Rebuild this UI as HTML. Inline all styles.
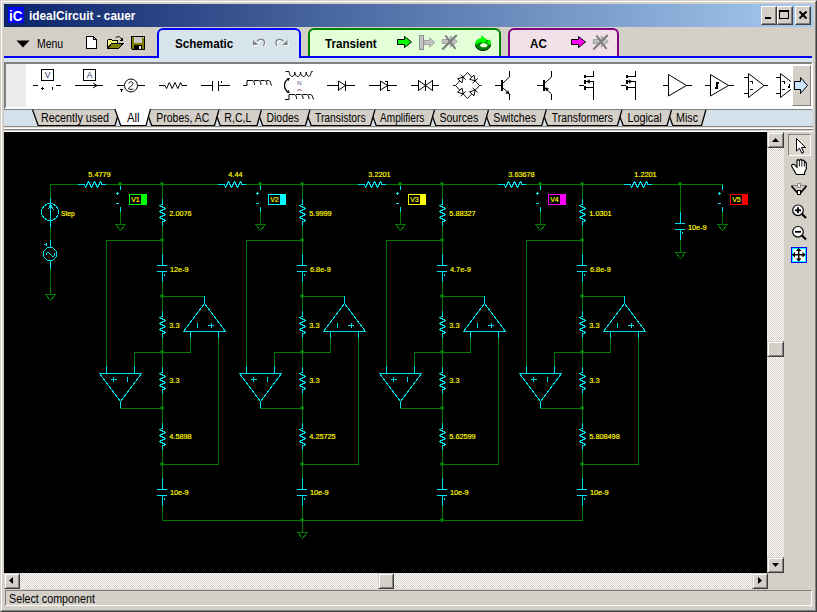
<!DOCTYPE html>
<html><head><meta charset="utf-8"><title>idealCircuit - cauer</title>
<style>
*{box-sizing:border-box;margin:0;padding:0}
html,body{width:817px;height:612px;overflow:hidden;background:#d4d0c8}
body{position:relative;font-family:"Liberation Sans",sans-serif;font-size:12px;color:#000}
.a{position:absolute}
.t{position:absolute;white-space:nowrap;transform-origin:0 0;line-height:1}
.btn{position:absolute;background:#d4d0c8;border:1px solid;border-color:#fff #404040 #404040 #fff;box-shadow:inset -1px -1px 0 #808080}
.sbtn{position:absolute;background:#d4d0c8;border:1px solid;border-color:#d4d0c8 #404040 #404040 #d4d0c8;box-shadow:inset 1px 1px 0 #fff,inset -1px -1px 0 #808080}
.sb{background:repeating-conic-gradient(#d4d0c8 0 25%,#fff 0 50%) 0 0/2px 2px}
svg{display:block}
</style></head>
<body>
<div class="a" style="left:0;top:0;width:817px;height:612px;border:1px solid;border-color:#d4d0c8 #404040 #404040 #d4d0c8"></div>
<div class="a" style="left:1px;top:1px;width:815px;height:610px;border:1px solid;border-color:#fff #808080 #808080 #fff"></div>
<div class="a" style="left:4px;top:4px;width:809px;height:23px;background:linear-gradient(to right,#0a246a,#a6caf0)"></div>
<div class="a" style="left:8px;top:7px;width:16px;height:16px;background:#0000ff"></div>
<div class="t" style="left:9px;top:8.3px;font-size:15px;color:#fff;font-weight:bold;transform:scaleX(0.9);">iC</div>
<div class="t" style="left:29px;top:10px;font-size:12px;color:#fff;font-weight:bold;transform:scaleX(0.985);">idealCircuit - cauer</div>
<div class="btn" style="left:761px;top:6px;width:16px;height:19px"></div>
<div class="btn" style="left:777px;top:6px;width:16px;height:19px"></div>
<div class="btn" style="left:795px;top:6px;width:16px;height:19px"></div>
<div class="a" style="left:765px;top:17px;width:6px;height:2px;background:#000"></div>
<div class="a" style="left:779px;top:10px;width:10px;height:9px;border:1px solid #000;border-top-width:2px"></div>
<svg class="a" style="left:798px;top:10px" width="10" height="10" viewBox="798 10 10 10" fill="none" ><path d="M799.5 11.5l7 7M806.5 11.5l-7 7" stroke="#000" stroke-width="2"/></svg>
<svg class="a" style="left:16px;top:40px" width="14" height="8"><path d="M0.5 0.5h13l-6.5 7z" fill="#000"/></svg>
<div class="t" style="left:36.7px;top:37.5px;font-size:12px;color:#000;transform:scaleX(0.87);">Menu</div>
<svg class="a" style="left:85px;top:35px" width="14" height="15" viewBox="85 35 14 15" fill="none" shape-rendering="crispEdges"><path d="M86.5 36.5h7l3 3v9h-10z" fill="#fff" stroke="#000"/><path d="M93.5 36.5v3h3" stroke="#000"/></svg>
<svg class="a" style="left:106px;top:34px" width="19" height="16" viewBox="106 34 19 16" fill="none" shape-rendering="crispEdges"><path d="M107.5 48.5v-8l1 -1h3l1 1h5v3" fill="#f4f480" stroke="#000"/><path d="M107.5 48.5l4 -5h11.5l-4.5 5z" fill="#808000" stroke="#000"/><path d="M115.5 38c1.5 -2 4.5 -2 6 1" stroke="#000" shape-rendering="auto"/><path d="M119.5 40.5h3v-3z" fill="#000"/></svg>
<svg class="a" style="left:130px;top:35px" width="17" height="16" viewBox="130 35 17 16" fill="none" shape-rendering="crispEdges"><path d="M131.500 36.500h13v13h-12l-1 -1z" fill="#808000" stroke="#000"/><rect x="134" y="37" width="8" height="6" fill="#c8c8c8"/><rect x="134" y="45" width="8" height="4" fill="#000"/><rect x="139" y="46" width="2" height="3" fill="#e8e8e8"/><rect x="143" y="37" width="1" height="1" fill="#fff"/></svg>
<div class="a" style="left:4px;top:56px;width:808px;height:2px;background:#0000ff"></div>
<div class="a" style="left:4px;top:58px;width:809px;height:4px;background:#d8e4ec"></div>
<div class="a" style="left:157px;top:28px;width:144px;height:30px;background:#d8e4ec;border:2px solid #0000ff;border-bottom:none;border-radius:6px 6px 0 0"></div>
<div class="a" style="left:308px;top:28px;width:193px;height:28px;background:#e2ffd8;border:2px solid #008000;border-bottom:none;border-radius:6px 6px 0 0"></div>
<div class="a" style="left:508px;top:28px;width:111px;height:28px;background:#f2e0e8;border:2px solid #800080;border-bottom:none;border-radius:6px 6px 0 0"></div>
<div class="t" style="left:175px;top:37.5px;font-size:12px;color:#000;font-weight:bold;transform:scaleX(0.97);">Schematic</div>
<div class="t" style="left:325px;top:37.5px;font-size:12px;color:#000;font-weight:bold;transform:scaleX(0.97);">Transient</div>
<div class="t" style="left:530px;top:37.5px;font-size:12px;color:#000;font-weight:bold;transform:scaleX(0.97);">AC</div>
<svg class="a" style="left:251px;top:36px" width="18" height="13" viewBox="251 36 18 13" fill="none" ><path d="M254 41v5h5z" fill="#fff"/><path d="M258 42.5c2 -3 8 -3 7.500 2l-1 2.500" stroke="#fff" stroke-width="1.300"/><path d="M253 40v5h5z" fill="#808080"/><path d="M257 41.5c2 -3 8 -3 7.500 2l-1 2.500" stroke="#808080" stroke-width="1.300"/></svg>
<svg class="a" style="left:273.3px;top:36px" width="18" height="13" viewBox="274 36 18 13" fill="none" ><path d="M289.5 41v5h-5z" fill="#fff"/><path d="M285.5 42.5c-2 -3 -8 -3 -7.500 2l1 2.500" stroke="#fff" stroke-width="1.300"/><path d="M288.5 40v5h-5z" fill="#808080"/><path d="M284.5 41.5c-2 -3 -8 -3 -7.500 2l1 2.500" stroke="#808080" stroke-width="1.300"/></svg>
<svg class="a" style="left:396px;top:34px" width="18" height="16" viewBox="396 34 18 16" fill="none" ><path d="M397.5 39.5h7v-3l7 5.500l-7 5.500v-3h-7z" fill="#00ff00" stroke="#000" stroke-linejoin="miter"/></svg>
<svg class="a" style="left:418px;top:34px" width="19" height="17" viewBox="418 34 19 17" fill="none" ><rect x="419.500" y="35.500" width="4" height="14" fill="#c4c4c4" stroke="#909090"/><path d="M424 40.500h5.500v-2.500l5.500 4.500l-5.500 4.500v-2.500h-5.500z" fill="#c4c4c4" stroke="#a0a0a0"/></svg>
<svg class="a" style="left:441px;top:33px" width="19" height="19" viewBox="441 33 19 19" fill="none" ><path d="M442.3 39.500h8v-3.500l7 5.500l-7 5.500v-3.500h-8z" fill="#c0c0c0" stroke="#a0a0a0"/><path d="M442.3 49.500l14.500 -14.500M445.5 35.500l10 13.500" stroke="#7c7c7c" stroke-width="2.100"/></svg>
<svg class="a" style="left:473px;top:33px" width="20" height="20" viewBox="473 33 20 20" fill="none" ><ellipse cx="483" cy="45" rx="7.500" ry="5.500" fill="#008000" stroke="#002800"/><path d="M475.300 45c-0.500 -3.500 1.500 -6.500 5.700 -6.800v-3l6.700 5l2.300 -0.700c1.300 1.500 1.300 4.500 0.500 6l-3 -2.500l-2 -0.500l-2.500 2.500h-1.500v-2.800l-3 0.800z" fill="#00ff00"/><path d="M481.500 42.300v3h1.500l5 -5.300" stroke="#003000" stroke-width="0.800"/><ellipse cx="483.800" cy="45.200" rx="3.600" ry="2" fill="#e2ffd8"/></svg>
<svg class="a" style="left:570px;top:34px" width="18" height="16" viewBox="570 34 18 16" fill="none" ><path d="M571.5 39.5h7v-3l7 5.500l-7 5.500v-3h-7z" fill="#ff00ff" stroke="#000" stroke-linejoin="miter"/></svg>
<svg class="a" style="left:591.8px;top:33px" width="19" height="19" viewBox="591.8 33 19 19" fill="none" ><path d="M593.1 39.500h8v-3.500l7 5.500l-7 5.500v-3.500h-8z" fill="#c0c0c0" stroke="#a0a0a0"/><path d="M593.1 49.500l14.500 -14.500M596.3 35.500l10 13.500" stroke="#7c7c7c" stroke-width="2.100"/></svg>
<div class="a" style="left:4px;top:62px;width:809px;height:47px;background:#fff;border:1px solid;border-color:#808080 #fff #fff #808080"></div>
<div class="a" style="left:5px;top:63px;width:807px;height:45px;border:1px solid;border-color:#808080 #fff #fff #808080"></div>
<div class="a" style="left:6px;top:64px;width:20px;height:43px;background:#ececec"></div>
<svg class="a" style="left:26px;top:64px" width="765" height="43" viewBox="26 64 765 43" fill="none" shape-rendering="crispEdges" font-family="Liberation Sans, sans-serif"><rect x="41.500" y="69.500" width="12" height="11" stroke="#000" fill="#fff"/><text x="47.500" y="78.300" font-size="8.500" text-anchor="middle" fill="#303060" stroke="none">V</text><path d="M33 85.500h5M56 85.500h5M41 88.500h3M42.500 87v3M52.500 87v3" stroke="#000" stroke-width="1" /><rect x="83.500" y="69.500" width="12" height="11" stroke="#000" fill="#fff"/><text x="89.500" y="78.300" font-size="8.500" text-anchor="middle" fill="#303060" stroke="none">A</text><path d="M75 85.500h28" stroke="#000" stroke-width="1" /><path d="M93 83l4 2.500l-4 2.500" stroke="#000" shape-rendering="auto"/><path d="M117 85.500h7M138 85.500h7M120 89.500h3M121.500 89.500v2" stroke="#000" stroke-width="1" /><circle cx="131" cy="85.500" r="6.500" stroke="#000" shape-rendering="auto"/><path d="M128.500 83.500c1 -2.500 5 -2 4.500 0.500c-0.500 2 -4 2.500 -4.500 5c1.500 0.500 3.500 0.500 5 0" stroke="#000" shape-rendering="auto" stroke-width="0.900"/><path d="M159 85.500h6l1.500 3l2.800 -6l2.900 6l2.800 -6l2.800 6l2.800 -6l1.400 3h5" stroke="#000" stroke-width="1" shape-rendering="auto"/><path d="M201 85.500h11M218 85.500h12M212.500 81v10M218.500 81v10M221.500 81v2" stroke="#000" stroke-width="1" /><path d="M243 85.5h4v-5h5c2 0 2.500 2 2.500 4.500m-0.500 -4.500h4.500c2 0 2.500 2 2.500 4.500m-0.500 -4.500h4c2 0 2.500 2 2.500 4.500m-0.500 -4.500h2c2 0 2 3 3 5" stroke="#000" shape-rendering="auto"/><path d="M285 99.5h4v-5h5c2 0 2.500 2 2.500 4.500m-0.500 -4.500h4.500c2 0 2.500 2 2.500 4.500m-0.500 -4.500h4c2 0 2.500 2 2.500 4.500m-0.500 -4.500h2c2 0 2 3 3 5" stroke="#000" shape-rendering="auto"/><path transform="translate(289 0) scale(0.88 1) translate(-289 0)" d="M285 71.500h4c0.500 3 1.500 5 3.500 5s3 -2 3 -4.500c0.500 2.500 1.500 4.500 3.500 4.500s3 -2 3 -4.500c0.500 2.500 1.500 4.500 3.500 4.500s3 -2 3 -4.500c0.500 2.500 1.500 4.500 3 4.500s2.500 -3 3 -5h1.500" stroke="#000" shape-rendering="auto"/><path d="M289 78.500c-6 3 -6 11 0 14" stroke="#000" stroke-width="1.300" shape-rendering="auto"/><path d="M290 78l-3.500 0.500l2 2.500zM290 93l-3.500 -0.500l2 -2.500z" fill="#000" shape-rendering="auto"/><text x="299.500" y="84.500" font-size="6" text-anchor="middle" fill="#504080" stroke="none">N</text><path d="M297.500 90.500c1 -1 3 -1 4 0" stroke="#703050" shape-rendering="auto"/><path d="M327 85.500h28M338.500 81v10M345.500 81v10" stroke="#000" stroke-width="1" /><path d="M338.500 81l7 4.500l-7 4.500z" stroke="#000" fill="#fff" shape-rendering="auto"/><path d="M369 85.500h28M380.500 81v10M387.500 81v10M385 81.500h3M387 90.500h3" stroke="#000" stroke-width="1" /><path d="M380.500 81l7 4.500l-7 4.500z" stroke="#000" fill="#fff" shape-rendering="auto"/><path d="M411 85.500h28M418.500 80v11M432.500 80v11M425.500 80v11" stroke="#000" stroke-width="1" /><path d="M418.500 80.500l7 5l-7 5zM432.500 80.500l-7 5l7 5z" stroke="#000" fill="#fff" shape-rendering="auto"/><path d="M453 85.500h2.500L467.500 72.500L479.500 85.500h2M479.500 85.500L467.500 98.500L455.500 85.500" stroke="#000" shape-rendering="auto" stroke-width="0.900"/><g transform="translate(461.5 79) rotate(-47)" shape-rendering="auto"><path d="M-2.500 -3v6l5 -3zM2.500 -3.500v7" stroke="#000" fill="#fff" stroke-width="0.900"/></g><g transform="translate(473.5 79) rotate(47)" shape-rendering="auto"><path d="M-2.500 -3v6l5 -3zM2.500 -3.500v7" stroke="#000" fill="#fff" stroke-width="0.900"/></g><g transform="translate(461.5 92) rotate(47)" shape-rendering="auto"><path d="M-2.500 -3v6l5 -3zM2.500 -3.500v7" stroke="#000" fill="#fff" stroke-width="0.900"/></g><g transform="translate(473.5 92) rotate(-47)" shape-rendering="auto"><path d="M-2.500 -3v6l5 -3zM2.500 -3.500v7" stroke="#000" fill="#fff" stroke-width="0.900"/></g><path d="M495 85.500h6" stroke="#000" stroke-width="1" /><rect x="500.5" y="80" width="2" height="10.500" fill="#000"/><path d="M502.5 83.500l7 -6.500v-6M502.5 87.500l7 6.500v6" stroke="#000" shape-rendering="auto"/><path d="M509.3 94l-3.500 -0.800l2.300 -2.500z" fill="#000" stroke="#000" stroke-width="0.500" shape-rendering="auto"/><path d="M537 85.500h6" stroke="#000" stroke-width="1" /><rect x="542.5" y="80" width="2" height="10.500" fill="#000"/><path d="M544.5 83.500l7 -6.500v-6M544.5 87.500l7 6.500v6" stroke="#000" shape-rendering="auto"/><path d="M545.2 87.800l3.500 0.800l-2.300 2.500z" fill="#000" stroke="#000" stroke-width="0.500" shape-rendering="auto"/><path d="M579 85.500h5" stroke="#000" stroke-width="1" /><path d="M585 74.500v3.500M585 79.500v4.500M585 85.500v4" stroke="#000" stroke-width="2"/><path d="M586 76.500h7.500v-5.500M586 81.500h7.500M586 87.500h7.500M593.5 81.500v18.500" stroke="#000" stroke-width="1" /><path d="M586.5 81.500l3 -1.800v3.600z" fill="#000" stroke="#000" stroke-width="0.500" shape-rendering="auto"/><path d="M621 85.500h5" stroke="#000" stroke-width="1" /><path d="M627 74.500v3.500M627 79.500v4.500M627 85.500v4" stroke="#000" stroke-width="2"/><path d="M628 76.500h7.500v-5.500M628 81.500h7.500M628 87.500h7.500M635.5 81.500v18.500" stroke="#000" stroke-width="1" /><path d="M632 81.500l-3 -1.800v3.600z" fill="#000" stroke="#000" stroke-width="0.500" shape-rendering="auto"/><path d="M663 85.500h5.500M686 85.500h6" stroke="#000" stroke-width="1" /><path d="M668.500 74.500v21.500l18 -10.500z" stroke="#000" shape-rendering="auto"/><path d="M705 85.500h5.500M728 85.500h6" stroke="#000" stroke-width="1" /><path d="M710.500 74.500v21.500l18 -10.500z" stroke="#000" shape-rendering="auto"/><path d="M714.500 88h2.500v-5h2" stroke="#000" stroke-width="1.3" /><path d="M744 77.500h4M744 93.500h4M764 85.500h4M750 81.500h3M752.500 80.500v3M750 89.500h3" stroke="#000" stroke-width="1" /><path d="M748.500 73.500v24l15.500 -12z" stroke="#000" shape-rendering="auto"/><path d="M776 77.500h4M776 93.500h4M782 81.500h3M784.500 80.500v3M782 89.500h3" stroke="#000" stroke-width="1" /><path d="M787.500 87h2.200v-3" stroke="#000" stroke-width="1.5" /><path d="M780.500 73.500v24l15.500 -12z" stroke="#000" shape-rendering="auto"/></svg>
<div class="a" style="left:792px;top:65px;width:19px;height:41px;background:#d4d0c8;border:1px solid;border-color:#fff #808080 #808080 #fff"></div>
<svg class="a" style="left:793px;top:76px" width="16" height="19" viewBox="793 76 16 19" fill="none" ><path d="M794.500 81.500h6v-4l7 8l-7 8v-4h-6z" fill="#cce4ff" stroke="#000"/></svg>
<div class="a" style="left:4px;top:62px;width:1px;height:47px;background:#808080"></div>
<div class="a" style="left:4px;top:109px;width:809px;height:17px;background:#d4e1ea"></div>
<svg class="a" style="left:4px;top:106px" width="808" height="21" viewBox="4 106 808 21" font-family="Liberation Sans, sans-serif"><path d="M4 109.500H813" stroke="#808080" shape-rendering="crispEdges"/><path d="M666.9 109.5L672.8 125.5H701.5L706 109.5z" fill="#d4d0c8" stroke="none"/><path d="M666.9 109.5L672.8 125.5H701.5L706 109.5" fill="none" stroke="#000" stroke-width="1.250"/><path d="M666.9 109.5H706" stroke="#808080" shape-rendering="crispEdges"/><path d="M617.3 109.5L623.2 125.5H667.1L671.6 109.5z" fill="#d4d0c8" stroke="none"/><path d="M617.3 109.5L623.2 125.5H667.1L671.6 109.5" fill="none" stroke="#000" stroke-width="1.250"/><path d="M617.3 109.5H671.6" stroke="#808080" shape-rendering="crispEdges"/><path d="M541.6 109.5L547.5 125.5H617.5L622 109.5z" fill="#d4d0c8" stroke="none"/><path d="M541.6 109.5L547.5 125.5H617.5L622 109.5" fill="none" stroke="#000" stroke-width="1.250"/><path d="M541.6 109.5H622" stroke="#808080" shape-rendering="crispEdges"/><path d="M483.9 109.5L489.8 125.5H541.8L546.3 109.5z" fill="#d4d0c8" stroke="none"/><path d="M483.9 109.5L489.8 125.5H541.8L546.3 109.5" fill="none" stroke="#000" stroke-width="1.250"/><path d="M483.9 109.5H546.3" stroke="#808080" shape-rendering="crispEdges"/><path d="M429.9 109.5L435.8 125.5H484.1L488.6 109.5z" fill="#d4d0c8" stroke="none"/><path d="M429.9 109.5L435.8 125.5H484.1L488.6 109.5" fill="none" stroke="#000" stroke-width="1.250"/><path d="M429.9 109.5H488.6" stroke="#808080" shape-rendering="crispEdges"/><path d="M370.3 109.5L376.2 125.5H430.1L434.6 109.5z" fill="#d4d0c8" stroke="none"/><path d="M370.3 109.5L376.2 125.5H430.1L434.6 109.5" fill="none" stroke="#000" stroke-width="1.250"/><path d="M370.3 109.5H434.6" stroke="#808080" shape-rendering="crispEdges"/><path d="M305.3 109.5L311.2 125.5H370.5L375 109.5z" fill="#d4d0c8" stroke="none"/><path d="M305.3 109.5L311.2 125.5H370.5L375 109.5" fill="none" stroke="#000" stroke-width="1.250"/><path d="M305.3 109.5H375" stroke="#808080" shape-rendering="crispEdges"/><path d="M256.8 109.5L262.7 125.5H305.5L310 109.5z" fill="#d4d0c8" stroke="none"/><path d="M256.8 109.5L262.7 125.5H305.5L310 109.5" fill="none" stroke="#000" stroke-width="1.250"/><path d="M256.8 109.5H310" stroke="#808080" shape-rendering="crispEdges"/><path d="M214.3 109.5L220.2 125.5H257L261.5 109.5z" fill="#d4d0c8" stroke="none"/><path d="M214.3 109.5L220.2 125.5H257L261.5 109.5" fill="none" stroke="#000" stroke-width="1.250"/><path d="M214.3 109.5H261.5" stroke="#808080" shape-rendering="crispEdges"/><path d="M145.8 109.5L151.7 125.5H214.5L219 109.5z" fill="#d4d0c8" stroke="none"/><path d="M145.8 109.5L151.7 125.5H214.5L219 109.5" fill="none" stroke="#000" stroke-width="1.250"/><path d="M145.8 109.5H219" stroke="#808080" shape-rendering="crispEdges"/><path d="M32.5 109.5L38.2 125.5H115L119.5 109.5z" fill="#d4d0c8" stroke="none"/><path d="M32.5 109.5L38.2 125.5H115L119.5 109.5" fill="none" stroke="#000" stroke-width="1.250"/><path d="M32.5 109.5H119.5" stroke="#808080" shape-rendering="crispEdges"/><path d="M114.8 109.5L120.7 125.5H146L150.5 109.5V107H114.8z" fill="#fff" stroke="none"/><path d="M114.8 109L120.7 125.5H146L150.5 109" fill="none" stroke="#000" stroke-width="1.250"/><text x="41" y="122" font-size="12.300" textLength="68" lengthAdjust="spacingAndGlyphs" fill="#000">Recently used</text><text x="127" y="122" font-size="12.300" textLength="12.5" lengthAdjust="spacingAndGlyphs" fill="#000">All</text><text x="156.3" y="122" font-size="12.300" textLength="53" lengthAdjust="spacingAndGlyphs" fill="#000">Probes, AC</text><text x="224.3" y="122" font-size="12.300" textLength="27.1" lengthAdjust="spacingAndGlyphs" fill="#000">R,C,L</text><text x="266.5" y="122" font-size="12.300" textLength="32.5" lengthAdjust="spacingAndGlyphs" fill="#000">Diodes</text><text x="315" y="122" font-size="12.300" textLength="50.6" lengthAdjust="spacingAndGlyphs" fill="#000">Transistors</text><text x="380" y="122" font-size="12.300" textLength="44.3" lengthAdjust="spacingAndGlyphs" fill="#000">Amplifiers</text><text x="439.4" y="122" font-size="12.300" textLength="38.9" lengthAdjust="spacingAndGlyphs" fill="#000">Sources</text><text x="493.3" y="122" font-size="12.300" textLength="42.7" lengthAdjust="spacingAndGlyphs" fill="#000">Switches</text><text x="551.8" y="122" font-size="12.300" textLength="61.2" lengthAdjust="spacingAndGlyphs" fill="#000">Transformers</text><text x="627.4" y="122" font-size="12.300" textLength="34.2" lengthAdjust="spacingAndGlyphs" fill="#000">Logical</text><text x="676" y="122" font-size="12.300" textLength="22" lengthAdjust="spacingAndGlyphs" fill="#000">Misc</text></svg>
<div class="a" style="left:4px;top:126px;width:809px;height:1px;background:#8c8a86"></div>
<div class="a" style="left:4px;top:127px;width:809px;height:1px;background:#e8e4dc"></div>
<div class="a" style="left:4px;top:128px;width:809px;height:1px;background:#ffffff"></div>
<div class="a" style="left:4px;top:129px;width:809px;height:1px;background:#808080"></div>
<div class="a" style="left:4px;top:130px;width:809px;height:1px;background:#d4d0c8"></div>
<div class="a" style="left:4px;top:131px;width:809px;height:1px;background:#ffffff"></div>
<svg id="schem" width="763" height="441" viewBox="4 132 763 441" style="position:absolute;left:4px;top:132px;background:#000" fill="none" stroke-width="1" shape-rendering="crispEdges" stroke-linecap="square" stroke-linejoin="bevel" font-family="Liberation Sans, sans-serif">
<polyline points="50.5,184.5 78.5,184.5" stroke="#007c00" />
<polyline points="106.5,184.5 218.5,184.5" stroke="#007c00" />
<polyline points="246.5,184.5 358.5,184.5" stroke="#007c00" />
<polyline points="386.5,184.5 498.5,184.5" stroke="#007c00" />
<polyline points="526.5,184.5 624.5,184.5" stroke="#007c00" />
<polyline points="652.5,184.5 722.5,184.5" stroke="#007c00" />
<polyline points="50.5,184.5 50.5,198.5" stroke="#007c00" />
<polyline points="50.5,226.5 50.5,240.5" stroke="#007c00" />
<polyline points="50.5,268.5 50.5,294.5" stroke="#007c00" />
<polyline points="45.5,294.5 55.5,294.5 50.5,300.5 45.5,294.5" stroke="#007c00" />
<polyline points="50.5,198.5 50.5,226.5" stroke="#00e0e8" />
<circle cx="50" cy="212" r="8.5" stroke="#00e0e8"/>
<polyline points="48.5,208.5 50.5,205.5 53.5,209.5" stroke="#00e0e8" />
<polyline points="49.5,205.5 51.5,205.5" stroke="#00e0e8" />
<polyline points="49.5,206.5 51.5,206.5" stroke="#00e0e8" />
<text x="61" y="216" font-size="6.7" fill="#ffff00" stroke="#ffee00" stroke-width="0.18">Step</text>
<polyline points="50.5,240.5 50.5,247.5" stroke="#00e0e8" />
<polyline points="50.5,261.5 50.5,268.5" stroke="#00e0e8" />
<polyline points="47.5,247.5 52.5,247.5 56.5,251.5 56.5,256.5 52.5,260.5 47.5,260.5 43.5,256.5 43.5,251.5 47.5,247.5" stroke="#00e0e8" />
<polyline points="46.5,254.5 46.5,253.5 47.5,252.5 48.5,252.5 52.5,256.5 53.5,256.5 54.5,255.5 54.5,253.5" stroke="#00e0e8" />
<polyline points="44.5,244.5 46.5,244.5" stroke="#00e0e8" />
<polyline points="46.5,243.5 46.5,245.5" stroke="#00e0e8" />
<polyline points="78.5,184.5 84.5,184.5 85.5,187.5 88.5,181.5 91.5,187.5 94.5,181.5 97.5,187.5 100.5,181.5 102,184.5 105.5,184.5" stroke="#00e0e8" />
<text x="88.3" y="177.2" font-size="7.3" fill="#ffff00" stroke="#ffee00" stroke-width="0.18">5.4779</text>
<polyline points="218.5,184.5 224.5,184.5 225.5,187.5 228.5,181.5 231.5,187.5 234.5,181.5 237.5,187.5 240.5,181.5 242,184.5 245.5,184.5" stroke="#00e0e8" />
<text x="228.3" y="177.2" font-size="7.3" fill="#ffff00" stroke="#ffee00" stroke-width="0.18">4.44</text>
<polyline points="358.5,184.5 364.5,184.5 365.5,187.5 368.5,181.5 371.5,187.5 374.5,181.5 377.5,187.5 380.5,181.5 382,184.5 385.5,184.5" stroke="#00e0e8" />
<text x="368.3" y="177.2" font-size="7.3" fill="#ffff00" stroke="#ffee00" stroke-width="0.18">3.2201</text>
<polyline points="498.5,184.5 504.5,184.5 505.5,187.5 508.5,181.5 511.5,187.5 514.5,181.5 517.5,187.5 520.5,181.5 522,184.5 525.5,184.5" stroke="#00e0e8" />
<text x="508.3" y="177.2" font-size="7.3" fill="#ffff00" stroke="#ffee00" stroke-width="0.18">3.63678</text>
<polyline points="624.5,184.5 630.5,184.5 631.5,187.5 634.5,181.5 637.5,187.5 640.5,181.5 643.5,187.5 646.5,181.5 648,184.5 651.5,184.5" stroke="#00e0e8" />
<text x="634.3" y="177.2" font-size="7.3" fill="#ffff00" stroke="#ffee00" stroke-width="0.18">1.2201</text>
<polyline points="120.5,185.5 120.5,189.5" stroke="#00e0e8" />
<polyline points="116.5,193.5 118.5,193.5" stroke="#00e0e8" />
<polyline points="117.5,192.5 117.5,194.5" stroke="#00e0e8" />
<polyline points="116.5,203.5 118.5,203.5" stroke="#00e0e8" />
<polyline points="120.5,207.5 120.5,212.5" stroke="#00e0e8" />
<polyline points="120.5,212.5 120.5,224.5" stroke="#007c00" />
<polyline points="115.5,224.5 125.5,224.5 120.5,230.5 115.5,224.5" stroke="#007c00" />
<rect x="129" y="194" width="18" height="11" fill="#00ff00" stroke="none"/>
<rect x="130" y="195" width="11" height="9" fill="#000" stroke="none"/>
<text x="131.2" y="202.2" font-size="7" fill="#ffff00" stroke="#ffee00" stroke-width="0.18">V1</text>
<polyline points="260.5,185.5 260.5,189.5" stroke="#00e0e8" />
<polyline points="256.5,193.5 258.5,193.5" stroke="#00e0e8" />
<polyline points="257.5,192.5 257.5,194.5" stroke="#00e0e8" />
<polyline points="256.5,203.5 258.5,203.5" stroke="#00e0e8" />
<polyline points="260.5,207.5 260.5,212.5" stroke="#00e0e8" />
<polyline points="260.5,212.5 260.5,224.5" stroke="#007c00" />
<polyline points="255.5,224.5 265.5,224.5 260.5,230.5 255.5,224.5" stroke="#007c00" />
<rect x="268" y="194" width="18" height="11" fill="#00ffff" stroke="none"/>
<rect x="269" y="195" width="11" height="9" fill="#000" stroke="none"/>
<text x="270.2" y="202.2" font-size="7" fill="#ffff00" stroke="#ffee00" stroke-width="0.18">V2</text>
<polyline points="400.5,185.5 400.5,189.5" stroke="#00e0e8" />
<polyline points="396.5,193.5 398.5,193.5" stroke="#00e0e8" />
<polyline points="397.5,192.5 397.5,194.5" stroke="#00e0e8" />
<polyline points="396.5,203.5 398.5,203.5" stroke="#00e0e8" />
<polyline points="400.5,207.5 400.5,212.5" stroke="#00e0e8" />
<polyline points="400.5,212.5 400.5,224.5" stroke="#007c00" />
<polyline points="395.5,224.5 405.5,224.5 400.5,230.5 395.5,224.5" stroke="#007c00" />
<rect x="408" y="194" width="18" height="11" fill="#ffff00" stroke="none"/>
<rect x="409" y="195" width="11" height="9" fill="#000" stroke="none"/>
<text x="410.2" y="202.2" font-size="7" fill="#ffff00" stroke="#ffee00" stroke-width="0.18">V3</text>
<polyline points="540.5,185.5 540.5,189.5" stroke="#00e0e8" />
<polyline points="536.5,193.5 538.5,193.5" stroke="#00e0e8" />
<polyline points="537.5,192.5 537.5,194.5" stroke="#00e0e8" />
<polyline points="536.5,203.5 538.5,203.5" stroke="#00e0e8" />
<polyline points="540.5,207.5 540.5,212.5" stroke="#00e0e8" />
<polyline points="540.5,212.5 540.5,224.5" stroke="#007c00" />
<polyline points="535.5,224.5 545.5,224.5 540.5,230.5 535.5,224.5" stroke="#007c00" />
<rect x="548" y="194" width="18" height="11" fill="#ff00ff" stroke="none"/>
<rect x="549" y="195" width="11" height="9" fill="#000" stroke="none"/>
<text x="550.2" y="202.2" font-size="7" fill="#ffff00" stroke="#ffee00" stroke-width="0.18">V4</text>
<polyline points="722.5,185.5 722.5,189.5" stroke="#00e0e8" />
<polyline points="718.5,193.5 720.5,193.5" stroke="#00e0e8" />
<polyline points="719.5,192.5 719.5,194.5" stroke="#00e0e8" />
<polyline points="718.5,203.5 720.5,203.5" stroke="#00e0e8" />
<polyline points="722.5,207.5 722.5,212.5" stroke="#00e0e8" />
<polyline points="722.5,212.5 722.5,224.5" stroke="#007c00" />
<polyline points="717.5,224.5 727.5,224.5 722.5,230.5 717.5,224.5" stroke="#007c00" />
<rect x="730" y="194" width="18" height="11" fill="#ff0000" stroke="none"/>
<rect x="731" y="195" width="11" height="9" fill="#000" stroke="none"/>
<text x="732.2" y="202.2" font-size="7" fill="#ffff00" stroke="#ffee00" stroke-width="0.18">V5</text>
<polyline points="680.5,184.5 680.5,212.5" stroke="#007c00" />
<polyline points="680.5,212.5 680.5,223.5" stroke="#00e0e8" />
<polyline points="675.5,223.5 684.5,223.5" stroke="#00e0e8" />
<polyline points="675.5,229.5 684.5,229.5" stroke="#00e0e8" />
<polyline points="680.5,229.5 680.5,240.5" stroke="#00e0e8" />
<polyline points="682.5,232.5 682.5,233.5" stroke="#00e0e8" />
<text x="688" y="230.2" font-size="7.3" fill="#ffff00" stroke="#ffee00" stroke-width="0.18">10e-9</text>
<polyline points="680.5,240.5 680.5,252.5" stroke="#007c00" />
<polyline points="675.5,252.5 685.5,252.5 680.5,258.5 675.5,252.5" stroke="#007c00" />
<polyline points="162.5,184.5 162.5,198.5" stroke="#007c00" />
<polyline points="162.5,199.5 162.5,204.5 159.5,205.5 165.5,208.5 159.5,211.5 165.5,214.5 159.5,217.5 165.5,220.5 162.5,222 162.5,225.5" stroke="#00e0e8" />
<text x="169.3" y="216.2" font-size="7.3" fill="#ffff00" stroke="#ffee00" stroke-width="0.18">2.0076</text>
<polyline points="162.5,226.5 162.5,254.5" stroke="#007c00" />
<polyline points="162.5,254.5 162.5,265.5" stroke="#00e0e8" />
<polyline points="157.5,265.5 166.5,265.5" stroke="#00e0e8" />
<polyline points="157.5,271.5 166.5,271.5" stroke="#00e0e8" />
<polyline points="162.5,271.5 162.5,282.5" stroke="#00e0e8" />
<polyline points="164.5,274.5 164.5,275.5" stroke="#00e0e8" />
<text x="170" y="272.2" font-size="7.3" fill="#ffff00" stroke="#ffee00" stroke-width="0.18">12e-9</text>
<polyline points="162.5,282.5 162.5,310.5" stroke="#007c00" />
<polyline points="162.5,311.5 162.5,316.5 159.5,317.5 165.5,320.5 159.5,323.5 165.5,326.5 159.5,329.5 165.5,332.5 162.5,334 162.5,337.5" stroke="#00e0e8" />
<text x="169.3" y="327.808" font-size="7.3" fill="#ffff00" stroke="#ffee00" stroke-width="0.18">3.3</text>
<polyline points="162.5,338.5 162.5,366.5" stroke="#007c00" />
<polyline points="162.5,367.5 162.5,372.5 159.5,373.5 165.5,376.5 159.5,379.5 165.5,382.5 159.5,385.5 165.5,388.5 162.5,390 162.5,393.5" stroke="#00e0e8" />
<text x="169.3" y="383.416" font-size="7.3" fill="#ffff00" stroke="#ffee00" stroke-width="0.18">3.3</text>
<polyline points="162.5,394.5 162.5,422.5" stroke="#007c00" />
<polyline points="162.5,423.5 162.5,428.5 159.5,429.5 165.5,432.5 159.5,435.5 165.5,438.5 159.5,441.5 165.5,444.5 162.5,446 162.5,449.5" stroke="#00e0e8" />
<text x="169.3" y="439.024" font-size="7.3" fill="#ffff00" stroke="#ffee00" stroke-width="0.18">4.5898</text>
<polyline points="162.5,450.5 162.5,478.5" stroke="#007c00" />
<polyline points="162.5,478.5 162.5,489.5" stroke="#00e0e8" />
<polyline points="157.5,489.5 166.5,489.5" stroke="#00e0e8" />
<polyline points="157.5,495.5 166.5,495.5" stroke="#00e0e8" />
<polyline points="162.5,495.5 162.5,506.5" stroke="#00e0e8" />
<polyline points="164.5,498.5 164.5,499.5" stroke="#00e0e8" />
<text x="170" y="494.632" font-size="7.3" fill="#ffff00" stroke="#ffee00" stroke-width="0.18">10e-9</text>
<polyline points="162.5,506.5 162.5,520.5" stroke="#007c00" />
<polyline points="162.5,240.5 106.5,240.5 106.5,366.5" stroke="#007c00" />
<polyline points="162.5,296.5 204.5,296.5" stroke="#007c00" />
<polyline points="204.5,296.5 204.5,303.5" stroke="#00e0e8" />
<polyline points="204.5,303.5 183.5,331.5 225.5,331.5 204.5,303.5" stroke="#00e0e8" />
<polyline points="190.5,331.5 190.5,338.5" stroke="#00e0e8" />
<polyline points="218.5,331.5 218.5,338.5" stroke="#00e0e8" />
<polyline points="197.5,323.5 197.5,327.5" stroke="#00e0e8" />
<polyline points="208.5,325.5 213.5,325.5" stroke="#00e0e8" />
<polyline points="211.5,323.5 211.5,327.5" stroke="#00e0e8" />
<polyline points="190.5,338.5 190.5,352.5 134.5,352.5 134.5,366.5" stroke="#007c00" />
<polyline points="218.5,338.5 218.5,464.5 162.5,464.5" stroke="#007c00" />
<polyline points="106.5,366.5 106.5,373.5" stroke="#00e0e8" />
<polyline points="134.5,366.5 134.5,373.5" stroke="#00e0e8" />
<polyline points="99.5,373.5 141.5,373.5 120.5,401.5 99.5,373.5" stroke="#00e0e8" />
<polyline points="120.5,401.5 120.5,408.5" stroke="#00e0e8" />
<polyline points="111.5,379.5 116.5,379.5" stroke="#00e0e8" />
<polyline points="113.5,377.5 113.5,381.5" stroke="#00e0e8" />
<polyline points="127.5,377.5 127.5,381.5" stroke="#00e0e8" />
<polyline points="120.5,408.5 162.5,408.5" stroke="#007c00" />
<path d="M159.5 184l2.5 -2.5l2.5 2.5l-2.5 2.5z" fill="#007c00" stroke="none"/>
<path d="M159.5 240l2.5 -2.5l2.5 2.5l-2.5 2.5z" fill="#007c00" stroke="none"/>
<path d="M159.5 296l2.5 -2.5l2.5 2.5l-2.5 2.5z" fill="#007c00" stroke="none"/>
<path d="M159.5 352l2.5 -2.5l2.5 2.5l-2.5 2.5z" fill="#007c00" stroke="none"/>
<path d="M159.5 408l2.5 -2.5l2.5 2.5l-2.5 2.5z" fill="#007c00" stroke="none"/>
<path d="M159.5 464l2.5 -2.5l2.5 2.5l-2.5 2.5z" fill="#007c00" stroke="none"/>
<polyline points="302.5,184.5 302.5,198.5" stroke="#007c00" />
<polyline points="302.5,199.5 302.5,204.5 299.5,205.5 305.5,208.5 299.5,211.5 305.5,214.5 299.5,217.5 305.5,220.5 302.5,222 302.5,225.5" stroke="#00e0e8" />
<text x="309.3" y="216.2" font-size="7.3" fill="#ffff00" stroke="#ffee00" stroke-width="0.18">5.9999</text>
<polyline points="302.5,226.5 302.5,254.5" stroke="#007c00" />
<polyline points="302.5,254.5 302.5,265.5" stroke="#00e0e8" />
<polyline points="297.5,265.5 306.5,265.5" stroke="#00e0e8" />
<polyline points="297.5,271.5 306.5,271.5" stroke="#00e0e8" />
<polyline points="302.5,271.5 302.5,282.5" stroke="#00e0e8" />
<polyline points="304.5,274.5 304.5,275.5" stroke="#00e0e8" />
<text x="310" y="272.2" font-size="7.3" fill="#ffff00" stroke="#ffee00" stroke-width="0.18">6.8e-9</text>
<polyline points="302.5,282.5 302.5,310.5" stroke="#007c00" />
<polyline points="302.5,311.5 302.5,316.5 299.5,317.5 305.5,320.5 299.5,323.5 305.5,326.5 299.5,329.5 305.5,332.5 302.5,334 302.5,337.5" stroke="#00e0e8" />
<text x="309.3" y="327.808" font-size="7.3" fill="#ffff00" stroke="#ffee00" stroke-width="0.18">3.3</text>
<polyline points="302.5,338.5 302.5,366.5" stroke="#007c00" />
<polyline points="302.5,367.5 302.5,372.5 299.5,373.5 305.5,376.5 299.5,379.5 305.5,382.5 299.5,385.5 305.5,388.5 302.5,390 302.5,393.5" stroke="#00e0e8" />
<text x="309.3" y="383.416" font-size="7.3" fill="#ffff00" stroke="#ffee00" stroke-width="0.18">3.3</text>
<polyline points="302.5,394.5 302.5,422.5" stroke="#007c00" />
<polyline points="302.5,423.5 302.5,428.5 299.5,429.5 305.5,432.5 299.5,435.5 305.5,438.5 299.5,441.5 305.5,444.5 302.5,446 302.5,449.5" stroke="#00e0e8" />
<text x="309.3" y="439.024" font-size="7.3" fill="#ffff00" stroke="#ffee00" stroke-width="0.18">4.25725</text>
<polyline points="302.5,450.5 302.5,478.5" stroke="#007c00" />
<polyline points="302.5,478.5 302.5,489.5" stroke="#00e0e8" />
<polyline points="297.5,489.5 306.5,489.5" stroke="#00e0e8" />
<polyline points="297.5,495.5 306.5,495.5" stroke="#00e0e8" />
<polyline points="302.5,495.5 302.5,506.5" stroke="#00e0e8" />
<polyline points="304.5,498.5 304.5,499.5" stroke="#00e0e8" />
<text x="310" y="494.632" font-size="7.3" fill="#ffff00" stroke="#ffee00" stroke-width="0.18">10e-9</text>
<polyline points="302.5,506.5 302.5,520.5" stroke="#007c00" />
<polyline points="302.5,240.5 246.5,240.5 246.5,366.5" stroke="#007c00" />
<polyline points="302.5,296.5 344.5,296.5" stroke="#007c00" />
<polyline points="344.5,296.5 344.5,303.5" stroke="#00e0e8" />
<polyline points="344.5,303.5 323.5,331.5 365.5,331.5 344.5,303.5" stroke="#00e0e8" />
<polyline points="330.5,331.5 330.5,338.5" stroke="#00e0e8" />
<polyline points="358.5,331.5 358.5,338.5" stroke="#00e0e8" />
<polyline points="337.5,323.5 337.5,327.5" stroke="#00e0e8" />
<polyline points="348.5,325.5 353.5,325.5" stroke="#00e0e8" />
<polyline points="351.5,323.5 351.5,327.5" stroke="#00e0e8" />
<polyline points="330.5,338.5 330.5,352.5 274.5,352.5 274.5,366.5" stroke="#007c00" />
<polyline points="358.5,338.5 358.5,464.5 302.5,464.5" stroke="#007c00" />
<polyline points="246.5,366.5 246.5,373.5" stroke="#00e0e8" />
<polyline points="274.5,366.5 274.5,373.5" stroke="#00e0e8" />
<polyline points="239.5,373.5 281.5,373.5 260.5,401.5 239.5,373.5" stroke="#00e0e8" />
<polyline points="260.5,401.5 260.5,408.5" stroke="#00e0e8" />
<polyline points="251.5,379.5 256.5,379.5" stroke="#00e0e8" />
<polyline points="253.5,377.5 253.5,381.5" stroke="#00e0e8" />
<polyline points="267.5,377.5 267.5,381.5" stroke="#00e0e8" />
<polyline points="260.5,408.5 302.5,408.5" stroke="#007c00" />
<path d="M299.5 184l2.5 -2.5l2.5 2.5l-2.5 2.5z" fill="#007c00" stroke="none"/>
<path d="M299.5 240l2.5 -2.5l2.5 2.5l-2.5 2.5z" fill="#007c00" stroke="none"/>
<path d="M299.5 296l2.5 -2.5l2.5 2.5l-2.5 2.5z" fill="#007c00" stroke="none"/>
<path d="M299.5 352l2.5 -2.5l2.5 2.5l-2.5 2.5z" fill="#007c00" stroke="none"/>
<path d="M299.5 408l2.5 -2.5l2.5 2.5l-2.5 2.5z" fill="#007c00" stroke="none"/>
<path d="M299.5 464l2.5 -2.5l2.5 2.5l-2.5 2.5z" fill="#007c00" stroke="none"/>
<polyline points="442.5,184.5 442.5,198.5" stroke="#007c00" />
<polyline points="442.5,199.5 442.5,204.5 439.5,205.5 445.5,208.5 439.5,211.5 445.5,214.5 439.5,217.5 445.5,220.5 442.5,222 442.5,225.5" stroke="#00e0e8" />
<text x="449.3" y="216.2" font-size="7.3" fill="#ffff00" stroke="#ffee00" stroke-width="0.18">5.88327</text>
<polyline points="442.5,226.5 442.5,254.5" stroke="#007c00" />
<polyline points="442.5,254.5 442.5,265.5" stroke="#00e0e8" />
<polyline points="437.5,265.5 446.5,265.5" stroke="#00e0e8" />
<polyline points="437.5,271.5 446.5,271.5" stroke="#00e0e8" />
<polyline points="442.5,271.5 442.5,282.5" stroke="#00e0e8" />
<polyline points="444.5,274.5 444.5,275.5" stroke="#00e0e8" />
<text x="450" y="272.2" font-size="7.3" fill="#ffff00" stroke="#ffee00" stroke-width="0.18">4.7e-9</text>
<polyline points="442.5,282.5 442.5,310.5" stroke="#007c00" />
<polyline points="442.5,311.5 442.5,316.5 439.5,317.5 445.5,320.5 439.5,323.5 445.5,326.5 439.5,329.5 445.5,332.5 442.5,334 442.5,337.5" stroke="#00e0e8" />
<text x="449.3" y="327.808" font-size="7.3" fill="#ffff00" stroke="#ffee00" stroke-width="0.18">3.3</text>
<polyline points="442.5,338.5 442.5,366.5" stroke="#007c00" />
<polyline points="442.5,367.5 442.5,372.5 439.5,373.5 445.5,376.5 439.5,379.5 445.5,382.5 439.5,385.5 445.5,388.5 442.5,390 442.5,393.5" stroke="#00e0e8" />
<text x="449.3" y="383.416" font-size="7.3" fill="#ffff00" stroke="#ffee00" stroke-width="0.18">3.3</text>
<polyline points="442.5,394.5 442.5,422.5" stroke="#007c00" />
<polyline points="442.5,423.5 442.5,428.5 439.5,429.5 445.5,432.5 439.5,435.5 445.5,438.5 439.5,441.5 445.5,444.5 442.5,446 442.5,449.5" stroke="#00e0e8" />
<text x="449.3" y="439.024" font-size="7.3" fill="#ffff00" stroke="#ffee00" stroke-width="0.18">5.62599</text>
<polyline points="442.5,450.5 442.5,478.5" stroke="#007c00" />
<polyline points="442.5,478.5 442.5,489.5" stroke="#00e0e8" />
<polyline points="437.5,489.5 446.5,489.5" stroke="#00e0e8" />
<polyline points="437.5,495.5 446.5,495.5" stroke="#00e0e8" />
<polyline points="442.5,495.5 442.5,506.5" stroke="#00e0e8" />
<polyline points="444.5,498.5 444.5,499.5" stroke="#00e0e8" />
<text x="450" y="494.632" font-size="7.3" fill="#ffff00" stroke="#ffee00" stroke-width="0.18">10e-9</text>
<polyline points="442.5,506.5 442.5,520.5" stroke="#007c00" />
<polyline points="442.5,240.5 386.5,240.5 386.5,366.5" stroke="#007c00" />
<polyline points="442.5,296.5 484.5,296.5" stroke="#007c00" />
<polyline points="484.5,296.5 484.5,303.5" stroke="#00e0e8" />
<polyline points="484.5,303.5 463.5,331.5 505.5,331.5 484.5,303.5" stroke="#00e0e8" />
<polyline points="470.5,331.5 470.5,338.5" stroke="#00e0e8" />
<polyline points="498.5,331.5 498.5,338.5" stroke="#00e0e8" />
<polyline points="477.5,323.5 477.5,327.5" stroke="#00e0e8" />
<polyline points="488.5,325.5 493.5,325.5" stroke="#00e0e8" />
<polyline points="491.5,323.5 491.5,327.5" stroke="#00e0e8" />
<polyline points="470.5,338.5 470.5,352.5 414.5,352.5 414.5,366.5" stroke="#007c00" />
<polyline points="498.5,338.5 498.5,464.5 442.5,464.5" stroke="#007c00" />
<polyline points="386.5,366.5 386.5,373.5" stroke="#00e0e8" />
<polyline points="414.5,366.5 414.5,373.5" stroke="#00e0e8" />
<polyline points="379.5,373.5 421.5,373.5 400.5,401.5 379.5,373.5" stroke="#00e0e8" />
<polyline points="400.5,401.5 400.5,408.5" stroke="#00e0e8" />
<polyline points="391.5,379.5 396.5,379.5" stroke="#00e0e8" />
<polyline points="393.5,377.5 393.5,381.5" stroke="#00e0e8" />
<polyline points="407.5,377.5 407.5,381.5" stroke="#00e0e8" />
<polyline points="400.5,408.5 442.5,408.5" stroke="#007c00" />
<path d="M439.5 184l2.5 -2.5l2.5 2.5l-2.5 2.5z" fill="#007c00" stroke="none"/>
<path d="M439.5 240l2.5 -2.5l2.5 2.5l-2.5 2.5z" fill="#007c00" stroke="none"/>
<path d="M439.5 296l2.5 -2.5l2.5 2.5l-2.5 2.5z" fill="#007c00" stroke="none"/>
<path d="M439.5 352l2.5 -2.5l2.5 2.5l-2.5 2.5z" fill="#007c00" stroke="none"/>
<path d="M439.5 408l2.5 -2.5l2.5 2.5l-2.5 2.5z" fill="#007c00" stroke="none"/>
<path d="M439.5 464l2.5 -2.5l2.5 2.5l-2.5 2.5z" fill="#007c00" stroke="none"/>
<polyline points="582.5,184.5 582.5,198.5" stroke="#007c00" />
<polyline points="582.5,199.5 582.5,204.5 579.5,205.5 585.5,208.5 579.5,211.5 585.5,214.5 579.5,217.5 585.5,220.5 582.5,222 582.5,225.5" stroke="#00e0e8" />
<text x="589.3" y="216.2" font-size="7.3" fill="#ffff00" stroke="#ffee00" stroke-width="0.18">1.0301</text>
<polyline points="582.5,226.5 582.5,254.5" stroke="#007c00" />
<polyline points="582.5,254.5 582.5,265.5" stroke="#00e0e8" />
<polyline points="577.5,265.5 586.5,265.5" stroke="#00e0e8" />
<polyline points="577.5,271.5 586.5,271.5" stroke="#00e0e8" />
<polyline points="582.5,271.5 582.5,282.5" stroke="#00e0e8" />
<polyline points="584.5,274.5 584.5,275.5" stroke="#00e0e8" />
<text x="590" y="272.2" font-size="7.3" fill="#ffff00" stroke="#ffee00" stroke-width="0.18">6.8e-9</text>
<polyline points="582.5,282.5 582.5,310.5" stroke="#007c00" />
<polyline points="582.5,311.5 582.5,316.5 579.5,317.5 585.5,320.5 579.5,323.5 585.5,326.5 579.5,329.5 585.5,332.5 582.5,334 582.5,337.5" stroke="#00e0e8" />
<text x="589.3" y="327.808" font-size="7.3" fill="#ffff00" stroke="#ffee00" stroke-width="0.18">3.3</text>
<polyline points="582.5,338.5 582.5,366.5" stroke="#007c00" />
<polyline points="582.5,367.5 582.5,372.5 579.5,373.5 585.5,376.5 579.5,379.5 585.5,382.5 579.5,385.5 585.5,388.5 582.5,390 582.5,393.5" stroke="#00e0e8" />
<text x="589.3" y="383.416" font-size="7.3" fill="#ffff00" stroke="#ffee00" stroke-width="0.18">3.3</text>
<polyline points="582.5,394.5 582.5,422.5" stroke="#007c00" />
<polyline points="582.5,423.5 582.5,428.5 579.5,429.5 585.5,432.5 579.5,435.5 585.5,438.5 579.5,441.5 585.5,444.5 582.5,446 582.5,449.5" stroke="#00e0e8" />
<text x="589.3" y="439.024" font-size="7.3" fill="#ffff00" stroke="#ffee00" stroke-width="0.18">5.808498</text>
<polyline points="582.5,450.5 582.5,478.5" stroke="#007c00" />
<polyline points="582.5,478.5 582.5,489.5" stroke="#00e0e8" />
<polyline points="577.5,489.5 586.5,489.5" stroke="#00e0e8" />
<polyline points="577.5,495.5 586.5,495.5" stroke="#00e0e8" />
<polyline points="582.5,495.5 582.5,506.5" stroke="#00e0e8" />
<polyline points="584.5,498.5 584.5,499.5" stroke="#00e0e8" />
<text x="590" y="494.632" font-size="7.3" fill="#ffff00" stroke="#ffee00" stroke-width="0.18">10e-9</text>
<polyline points="582.5,506.5 582.5,520.5" stroke="#007c00" />
<polyline points="582.5,240.5 526.5,240.5 526.5,366.5" stroke="#007c00" />
<polyline points="582.5,296.5 624.5,296.5" stroke="#007c00" />
<polyline points="624.5,296.5 624.5,303.5" stroke="#00e0e8" />
<polyline points="624.5,303.5 603.5,331.5 645.5,331.5 624.5,303.5" stroke="#00e0e8" />
<polyline points="610.5,331.5 610.5,338.5" stroke="#00e0e8" />
<polyline points="638.5,331.5 638.5,338.5" stroke="#00e0e8" />
<polyline points="617.5,323.5 617.5,327.5" stroke="#00e0e8" />
<polyline points="628.5,325.5 633.5,325.5" stroke="#00e0e8" />
<polyline points="631.5,323.5 631.5,327.5" stroke="#00e0e8" />
<polyline points="610.5,338.5 610.5,352.5 554.5,352.5 554.5,366.5" stroke="#007c00" />
<polyline points="638.5,338.5 638.5,464.5 582.5,464.5" stroke="#007c00" />
<polyline points="526.5,366.5 526.5,373.5" stroke="#00e0e8" />
<polyline points="554.5,366.5 554.5,373.5" stroke="#00e0e8" />
<polyline points="519.5,373.5 561.5,373.5 540.5,401.5 519.5,373.5" stroke="#00e0e8" />
<polyline points="540.5,401.5 540.5,408.5" stroke="#00e0e8" />
<polyline points="531.5,379.5 536.5,379.5" stroke="#00e0e8" />
<polyline points="533.5,377.5 533.5,381.5" stroke="#00e0e8" />
<polyline points="547.5,377.5 547.5,381.5" stroke="#00e0e8" />
<polyline points="540.5,408.5 582.5,408.5" stroke="#007c00" />
<path d="M579.5 184l2.5 -2.5l2.5 2.5l-2.5 2.5z" fill="#007c00" stroke="none"/>
<path d="M579.5 240l2.5 -2.5l2.5 2.5l-2.5 2.5z" fill="#007c00" stroke="none"/>
<path d="M579.5 296l2.5 -2.5l2.5 2.5l-2.5 2.5z" fill="#007c00" stroke="none"/>
<path d="M579.5 352l2.5 -2.5l2.5 2.5l-2.5 2.5z" fill="#007c00" stroke="none"/>
<path d="M579.5 408l2.5 -2.5l2.5 2.5l-2.5 2.5z" fill="#007c00" stroke="none"/>
<path d="M579.5 464l2.5 -2.5l2.5 2.5l-2.5 2.5z" fill="#007c00" stroke="none"/>
<polyline points="162.5,520.5 582.5,520.5" stroke="#007c00" />
<polyline points="302.5,520.5 302.5,532.5" stroke="#007c00" />
<polyline points="297.5,532.5 307.5,532.5 302.5,538.5 297.5,532.5" stroke="#007c00" />
<path d="M299.5 520l2.5 -2.5l2.5 2.5l-2.5 2.5z" fill="#007c00" stroke="none"/>
<path d="M439.5 520l2.5 -2.5l2.5 2.5l-2.5 2.5z" fill="#007c00" stroke="none"/>
<path d="M117.5 184l2.5 -2.5l2.5 2.5l-2.5 2.5z" fill="#007c00" stroke="none"/>
<path d="M257.5 184l2.5 -2.5l2.5 2.5l-2.5 2.5z" fill="#007c00" stroke="none"/>
<path d="M397.5 184l2.5 -2.5l2.5 2.5l-2.5 2.5z" fill="#007c00" stroke="none"/>
<path d="M537.5 184l2.5 -2.5l2.5 2.5l-2.5 2.5z" fill="#007c00" stroke="none"/>
<path d="M677.5 184l2.5 -2.5l2.5 2.5l-2.5 2.5z" fill="#007c00" stroke="none"/>
</svg>
<div class="a sb" style="left:767px;top:132px;width:17px;height:441px"></div>
<div class="sbtn" style="left:767px;top:132px;width:17px;height:16px"></div>
<svg class="a" style="left:772px;top:138px" width="8" height="4"><path d="M0 4h7l-3.5 -4z" fill="#000"/></svg>
<div class="sbtn" style="left:767px;top:557px;width:17px;height:16px"></div>
<svg class="a" style="left:772px;top:563px" width="8" height="4"><path d="M0 0h7l-3.5 4z" fill="#000"/></svg>
<div class="sbtn" style="left:767px;top:341px;width:17px;height:16px"></div>
<div class="a sb" style="left:4px;top:573px;width:763px;height:16px"></div>
<div class="sbtn" style="left:4px;top:573px;width:16px;height:16px"></div>
<svg class="a" style="left:9px;top:577px" width="4" height="8"><path d="M4 0v7l-4 -3.5z" fill="#000"/></svg>
<div class="sbtn" style="left:752px;top:573px;width:16px;height:16px"></div>
<svg class="a" style="left:758px;top:577px" width="4" height="8"><path d="M0 0v7l4 -3.5z" fill="#000"/></svg>
<div class="sbtn" style="left:378px;top:573px;width:16px;height:16px"></div>
<div class="a" style="left:788px;top:134px;width:23px;height:22px;border:1px solid;border-color:#808080 #fff #fff #808080;background:#dcd8d0"></div>
<svg class="a" style="left:786px;top:132px" width="27" height="136" viewBox="786 132 27 136" fill="none"><path d="M796.500 138.500v12.500l3 -2.800l2.300 5l2 -0.900l-2.300 -4.800h4z" fill="#fff" stroke="#000" stroke-linejoin="miter"/><path d="M796.500 174.500L793.500 169.500L791.500 166L792.300 164.300L794.500 164.500L797 167.500V160.500L798.200 159.500L799.400 160.500L800.600 159.300L801.900 160.300L803.100 160L804.400 161L805.300 162L806.300 163V169L804.500 172.500V174.500Z" fill="#fff" stroke="#000" stroke-width="1.150" stroke-linejoin="round"/><path d="M799.400 160.500V166.500M801.900 160.300V166.500M804.400 161.500V166.500" stroke="#000" stroke-width="0.900"/><path d="M791 185.500H807" stroke="#808080"/><path d="M791.500 186L798 193.500M806.500 186L800 193.500" fill="none" stroke="#000" stroke-width="1.800"/><rect x="797.500" y="183.500" width="3" height="4" fill="#e8e8e8" stroke="#909090"/><rect x="797.500" y="190.500" width="3" height="4" fill="#fff" stroke="#000"/><path d="M802 214l4 4" stroke="#000" stroke-width="2.200"/><circle cx="798" cy="210.3" r="5.300" fill="#fff" stroke="#000" stroke-width="1.200"/><path d="M795 210.3h6" stroke="#000" stroke-width="1.800"/><path d="M798 207.3v6" stroke="#000" stroke-width="1.800"/><path d="M802 235.5l4 4" stroke="#000" stroke-width="2.200"/><circle cx="798" cy="231.8" r="5.300" fill="#fff" stroke="#000" stroke-width="1.200"/><path d="M795 231.8h6" stroke="#000" stroke-width="1.800"/><rect x="791.500" y="247.500" width="15" height="15" fill="#fff" stroke="#0000ff" shape-rendering="crispEdges"/><rect x="792.500" y="248.500" width="13" height="13" fill="none" stroke="#00ffff" shape-rendering="crispEdges"/><path d="M798.700 249v11.500M793 254.700h11.500" stroke="#000" stroke-width="1.500"/><path d="M798.700 247.800l-2.800 3.200h5.600zM798.700 261.700l-2.800 -3.200h5.600zM791.800 254.700l3.200 -2.800v5.600zM805.700 254.700l-3.200 -2.800v5.600z" fill="#000"/></svg>
<div class="a" style="left:5px;top:590px;width:807px;height:16px;border:1px solid;border-color:#808080 #fff #fff #808080"></div>
<div class="t" style="left:9px;top:593px;font-size:12px;color:#000;transform:scaleX(0.895);">Select component</div>
</body></html>
